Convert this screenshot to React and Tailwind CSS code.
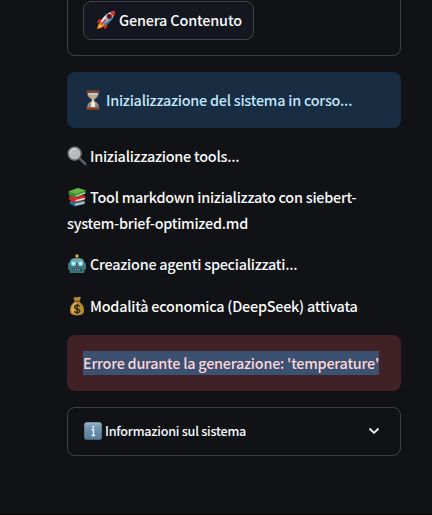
const FONT = "font-['Noto_Sans_CJK_SC','Noto_Sans',sans-serif]";

function Rocket() {
  return (
    <svg viewBox="0 0 20 20" className="h-5 w-5 shrink-0">
      <path d="M7 9 L2.5 9.6 L.8 13 L6 12Z" fill="#d9281e" />
      <path d="M11.5 13 L11 17.6 L8 19.3 L8.2 14Z" fill="#d9281e" />
      <path d="M5.5 11.5 Q1.5 13.5 1 19 Q6.5 18.6 8.8 15Z" fill="#f37a1c" />
      <path d="M5.8 13 Q3 14.5 2.3 17.8 Q6 16.6 7.5 14.6Z" fill="#ffd83d" />
      <path d="M4.8 11.5 Q9 2.5 19 .8 Q18.6 10.5 8.6 15.5Z" fill="#9fb4c6" />
      <path d="M4.8 11.5 Q9 3.5 17 1.3 L6.5 13.4Z" fill="#d5e1e9" />
      <path d="M14 2.2 L19 .8 Q19.2 4 17.9 6.2Z" fill="#d62b24" />
      <path d="M7.2 14 Q14.5 10 17.5 5.5 Q15.5 12 8.6 15.5Z" fill="#3d78a6" />
      <circle cx="13.2" cy="6.5" r="2.7" fill="#9c1f22" />
      <circle cx="13.2" cy="6.5" r="1.7" fill="#28222b" />
      <path d="M5 15 L10 9.2" stroke="#b92920" strokeWidth="1.3" />
    </svg>
  );
}

function Hourglass() {
  return (
    <svg viewBox="0 0 20 20" className="h-5 w-5 shrink-0">
      <path d="M4.2 2 H15.8 Q16.4 6.5 11.3 9.5 V10.8 Q16.4 13.5 15.8 18 H4.2 Q3.6 13.5 8.7 10.8 V9.5 Q3.6 6.5 4.2 2Z" fill="#8d9192" />
      <path d="M5 3 H15 Q14.8 4.4 14 5.5 H6 Q5.1 4.5 5 3Z" fill="#c2c8c8" />
      <path d="M5.7 5.2 H14.3 Q13 7.8 10.6 9.2 H9.4 Q7 7.8 5.7 5.2Z" fill="#c9a77f" />
      <path d="M9.5 9 H10.5 L11 12 Q14.8 14.2 15 17.5 H5 Q5.2 14.2 9 12Z" fill="#f2e7d3" />
      <path d="M5 17.4 Q5.4 14.3 8 13 L7.6 17.4Z M15 17.4 Q14.6 14.3 12 13 L12.4 17.4Z" fill="#6f777b" />
      <rect x="3.2" y=".4" width="13.6" height="2.4" rx=".7" fill="#70301e" />
      <rect x="3.2" y="17.2" width="13.6" height="2.5" rx=".7" fill="#8b3d23" />
      <path d="M4 1 H16 M4 17.8 H16" stroke="#bb6a43" strokeWidth=".5" />
    </svg>
  );
}

function Magnifier() {
  return (
    <svg viewBox="0 0 20 20" className="h-5 w-5 shrink-0">
      <path d="M12.5 12.5 L18.2 18" stroke="#4b4f53" strokeWidth="3" strokeLinecap="round" />
      <path d="M13.6 12.8 L18.3 17.3" stroke="#7d8184" strokeWidth=".8" strokeLinecap="round" />
      <circle cx="7.6" cy="7.6" r="6.6" fill="#b9bcbd" stroke="#65696c" strokeWidth="1.5" />
      <path d="M3 7.4 A4.8 4.8 0 0 1 9.5 3" fill="none" stroke="#d8dada" strokeWidth="1.2" />
    </svg>
  );
}

function Books() {
  return (
    <svg viewBox="0 0 20 20" className="h-5 w-5 shrink-0">
      <path d="M3 14 L13 12.4 L18 14.3 L17.5 17 L8 19.5 L3 17Z" fill="#256e91" />
      <path d="M8 16.5 L17.8 14.5 L17.4 16.7 L8.2 18.8Z" fill="#aebfc2" />
      <path d="M2 9 L12 7 L18.5 9.3 L17.8 13 L7.5 15.7 L2.2 12.8Z" fill="#c92b2b" />
      <path d="M8.5 13 L18 10.8 L17.4 12.4 L8.6 14.6Z" fill="#eae3df" />
      <path d="M1.5 4.6 L11 1 L18.8 3.5 L18.3 7 L8.3 10.6 L1.6 7.7Z" fill="#368b35" />
      <path d="M1.5 4.6 L11 1 L18.8 3.5 L8.5 7Z" fill="#65b545" />
      <path d="M9 8.4 L18.2 5.3 L17.8 6.6 L9 9.6Z" fill="#dae8cf" />
    </svg>
  );
}

function Robot() {
  return (
    <svg viewBox="0 0 20 20" className="h-5 w-5 shrink-0">
      <path d="M10 2 V5" stroke="#b94843" strokeWidth="1.6" />
      <circle cx="10" cy="1.9" r="1.6" fill="#f4ad31" />
      <rect x="1.2" y="8.7" width="3" height="7" rx="1.2" fill="#3f8994" />
      <rect x="15.8" y="8.7" width="3" height="7" rx="1.2" fill="#3f8994" />
      <path d="M2.6 9 Q2.6 3.8 10 3.8 Q17.4 3.8 17.4 9 V18 Q17.4 19 16 19 H4 Q2.6 19 2.6 18Z" fill="#3f747f" />
      <path d="M3 8.8 Q3 4.4 10 4.4 Q17 4.4 17 8.8Z" fill="#74a5ac" />
      <circle cx="6.4" cy="9.6" r="2.6" fill="#67d5dc" />
      <circle cx="13.6" cy="9.6" r="2.6" fill="#67d5dc" />
      <circle cx="6.4" cy="9.6" r="1.3" fill="#eefeff" />
      <circle cx="13.6" cy="9.6" r="1.3" fill="#eefeff" />
      <path d="M10 10.5 L11.2 13 H8.8Z" fill="#bd3f3c" />
      <rect x="5.2" y="14.6" width="9.6" height="2.6" rx=".8" fill="#244b55" />
      <path d="M6.2 15.9 H13.8" stroke="#9ad3d6" strokeWidth="1" strokeDasharray="1.2 .7" />
    </svg>
  );
}

function MoneyBag() {
  return (
    <svg viewBox="0 0 20 20" className="h-5 w-5 shrink-0">
      <path d="M6.5 1.8 Q8.2 .2 10 1.6 Q12 .2 14 1.4 L12.2 5.5 Q17 9 17 14.5 Q17 19.4 10 19.4 Q3 19.4 3 14.5 Q3 9 7.8 5.5Z" fill="#b98a35" />
      <path d="M7.8 6.5 Q4.2 10 4.3 14 Q5 17.5 8 18.2 Q6 12 10 6.5Z" fill="#d6ac54" />
      <path d="M7.4 5.4 H12.7" stroke="#704c20" strokeWidth="1.3" strokeLinecap="round" />
      <path d="M12.6 10.2 Q11.6 9.2 10 9.2 Q7.6 9.2 7.6 11 Q7.6 12.4 10 12.9 Q12.7 13.4 12.7 15 Q12.7 16.7 10 16.7 Q8.3 16.7 7.2 15.6 M10.1 8 V18" fill="none" stroke="#3b2a16" strokeWidth="1.4" />
    </svg>
  );
}

function Info() {
  return (
    <svg viewBox="0 0 18 18" className="h-[18px] w-[18px] shrink-0">
      <defs>
        <linearGradient id="tile" x2="0" y2="1">
          <stop stopColor="#9fb9cc" />
          <stop offset=".25" stopColor="#7799b3" />
          <stop offset="1" stopColor="#58799a" />
        </linearGradient>
      </defs>
      <rect x=".2" y=".2" width="17.6" height="17.6" rx="2.6" fill="url(#tile)" />
      <path d="M7.5 7.5 H9.5 V13.3 M7.5 13.5 H11.2" fill="none" stroke="#f1f5f7" strokeWidth="1.3" />
      <circle cx="9.3" cy="4.8" r="1.1" fill="#f1f5f7" />
    </svg>
  );
}

export default function App() {
  return (
    <div className={`h-[515px] overflow-hidden border-b border-[#050506] bg-[#111216] pr-[31px] pl-[67px] text-[14.4px] leading-[26px] font-medium tracking-[-0.235px] text-[#fafafa] ${FONT}`}>
      <div className="h-14 rounded-b-lg border border-t-0 border-[#3e3f44] px-[15px] pt-px">
        <button className="flex h-[39px] w-[171px] items-center rounded-lg border border-[#41424a] bg-[#141620] pb-px pl-3">
          <Rocket />
          <span className="ml-[3px] whitespace-nowrap tracking-[-0.15px]">Genera Contenuto</span>
        </button>
      </div>
      <div className="mt-4 flex h-14 items-center rounded-lg bg-[#182c42] pl-4 text-[#c0e6fb]">
        <Hourglass />
        <span className="ml-[3px] whitespace-nowrap">Inizializzazione del sistema in corso...</span>
      </div>
      <p className="mt-[15px] flex items-center">
        <Magnifier />
        <span className="ml-[3px] whitespace-nowrap">Inizializzazione tools...</span>
      </p>
      <div className="mt-[15px]">
        <p className="flex items-center">
          <Books />
          <span className="ml-[3px] whitespace-nowrap">Tool markdown inizializzato con siebert-</span>
        </p>
        <p className="whitespace-nowrap">system-brief-optimized.md</p>
      </div>
      <p className="mt-[15px] flex items-center">
        <Robot />
        <span className="ml-[3px] whitespace-nowrap">Creazione agenti specializzati...</span>
      </p>
      <p className="mt-4 flex items-center">
        <MoneyBag />
        <span className="ml-[3px] whitespace-nowrap">Modalità economica (DeepSeek) attivata</span>
      </p>
      <div className="mt-4 flex h-14 items-center rounded-lg bg-[#402126] pl-4 text-[#fbd6d9]">
        <span className="h-6 bg-[#3c506f] leading-6 whitespace-nowrap">Errore durante la generazione: 'temperature'</span>
      </div>
      <div className="mt-4 flex h-[49px] items-center rounded-lg border border-[#3e3f44] pb-[2px] pl-4 text-[12.6px]">
        <Info />
        <span className="ml-[3px] whitespace-nowrap">Informazioni sul sistema</span>
        <svg viewBox="0 0 12 8" className="mr-5 ml-auto h-2 w-3">
          <path d="M1.5 1.5 L6 5.8 L10.5 1.5" fill="none" stroke="#fafafa" strokeWidth="1.8" />
        </svg>
      </div>
    </div>
  );
}
